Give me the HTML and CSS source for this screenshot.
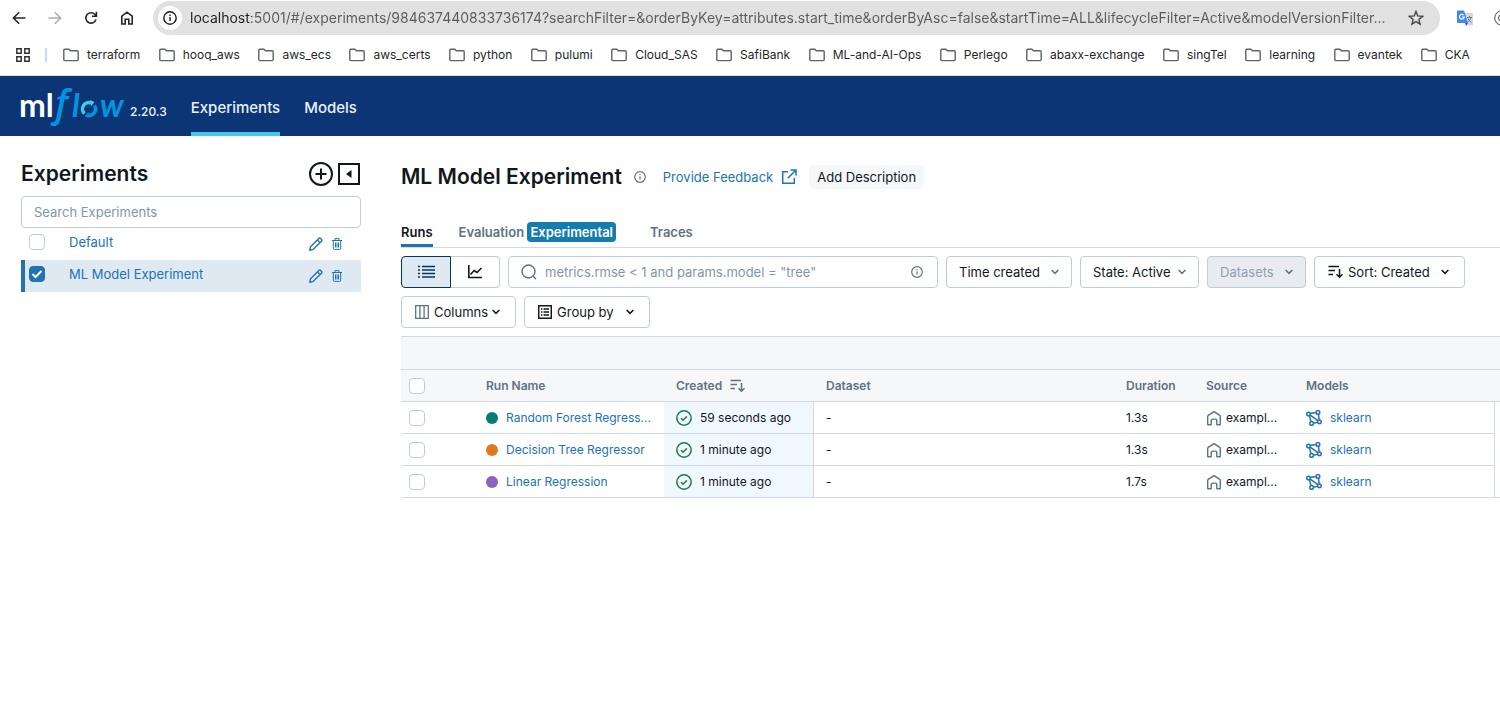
FILE: index.html
```html
<!DOCTYPE html>
<html lang="en">
<head>
    <meta charset="UTF-8">
    <meta name="viewport" content="width=device-width, initial-scale=1.0">
    <title>ML Model Experiment - MLflow</title>
    <link rel="stylesheet" href="styles.css">
</head>
<body>
    <!-- shared icons -->
    <svg class="sprite" aria-hidden="true">
        <symbol id="folder" viewBox="0 0 16 14"><path d="M.8 11.6V2.2q0-1 1-1h4l1.6 1.6h6.8q1 0 1 1v7.8q0 1-1 1H1.8q-1 0-1-1z" fill="none" stroke="#5f6368" stroke-width="1.4"/></symbol>
        <symbol id="info" viewBox="0 0 12 12"><circle cx="6" cy="6" r="5.3" fill="none" stroke="currentColor" stroke-width="1.2"/><path d="M6 5.2v3.4M6 3v1.2" stroke="currentColor" stroke-width="1.2"/></symbol>
        <symbol id="pencil" viewBox="0 0 14 14"><path d="M.8 13.2l.6-3.2 8.4-8.5q.9-.8 1.8 0l.9.9q.8.9 0 1.8L4 12.6zM8.4 3l2.6 2.6" fill="none" stroke="currentColor" stroke-width="1.4" stroke-linejoin="round"/></symbol>
        <symbol id="trash" viewBox="0 0 10 12"><path d="M0 2.5h10M3 2.3V.6h4v1.7M1.3 2.6v7.6q0 1.2 1.1 1.2h5.2q1.1 0 1.1-1.2V2.6M3.5 4.5v5M5 4.5v5M6.5 4.5v5" fill="none" stroke="currentColor"/></symbol>
        <symbol id="chevron" viewBox="0 0 8 6"><path d="M.6 1L4 4.4 7.4 1" fill="none" stroke="currentColor" stroke-width="1.5"/></symbol>
        <symbol id="sort" viewBox="0 0 16 14"><path d="M.5 1.5h10.5M.5 5.5h6.5M.5 9.5h4.5M11.5 4v8M8.500 9.300l3 3 3-3" fill="none" stroke="currentColor" stroke-width="1.5"/></symbol>
        <symbol id="check" viewBox="0 0 16 16"><circle cx="8" cy="8" r="7.2" fill="none" stroke="currentColor" stroke-width="1.5"/><path d="M5 8.2l2.1 2 3.8-3.8" fill="none" stroke="currentColor" stroke-width="1.5"/></symbol>
        <symbol id="home" viewBox="0 0 16 16"><path d="M1.7 14.2V6.4q0-.7.5-1L8 1.6l5.8 3.8q.5.3.5 1v7.8q0 .6-.6.6h-2.4q-.5 0-.5-.6v-3.6q0-1.5-1.3-1.5H6.5q-1.3 0-1.3 1.5v3.6q0 .6-.5.6H2.3q-.6 0-.6-.6z" fill="none" stroke="currentColor" stroke-width="1.4"/></symbol>
        <symbol id="model" viewBox="0 0 16 16"><g fill="none" stroke="currentColor" stroke-width="1.5"><path d="M4.2 3.6l5.8-1M3.3 5.6l1.8 6M3.9 4.9l8 5.8M12.4 4.2l.8 6.2M7.6 13.2l4-1.1"/><circle cx="2.5" cy="4" r="1.8"/><circle cx="12" cy="2.4" r="1.8"/><circle cx="5.6" cy="13.4" r="1.8"/><circle cx="13.4" cy="11.8" r="1.8"/></g></symbol>
    </svg>

    <div class="browser">
        <div class="toolbar">
            <button class="nav-btn" aria-label="Back"><svg width="14" height="14" viewBox="0 0 14 14"><path d="M13.5 7H1.5M7.2 1.2L1.4 7l5.8 5.8"/></svg></button>
            <button class="nav-btn off" aria-label="Forward"><svg width="14" height="14" viewBox="0 0 14 14"><path d="M.5 7h12M6.8 1.2L12.6 7l-5.8 5.8"/></svg></button>
            <button class="nav-btn" aria-label="Reload"><svg width="14" height="14" viewBox="0 0 14 14"><path d="M12 8.5A5.2 5.2 0 1 1 10.8 3.3L12.2 4.6M12.4.8v4.4H8"/></svg></button>
            <button class="nav-btn" aria-label="Home"><svg width="14" height="14" viewBox="0 0 14 14"><path d="M1.8 13V5.2L7 1.2l5.2 4V13H8.8V8.2H5.2V13z"/></svg></button>
            <div class="address">
                <span class="site-info"><svg width="14" height="14"><use href="#info"/></svg></span>
                <input type="text" class="url" aria-label="Address" value="localhost:5001/#/experiments/984637440833736174?searchFilter=&amp;orderByKey=attributes.start_time&amp;orderByAsc=false&amp;startTime=ALL&amp;lifecycleFilter=Active&amp;modelVersionFilter...">
                <button class="star" aria-label="Bookmark"><svg width="16" height="16" viewBox="0 0 16 16"><path d="M8 1.4l1.8 4.5 4.9.4-3.8 3.1 1.2 4.8L8 11.6l-4.1 2.6 1.2-4.8-3.8-3.1 4.9-.4z" fill="none" stroke="#474747" stroke-width="1.4"/></svg></button>
            </div>
            <div class="extensions">
                <svg width="17" height="17" viewBox="0 0 17 17"><path d="M6 3h10v12.5H9z" fill="#d5d7db"/><path d="M10 7.5h5M12.5 6v1.5M14.2 7.5q-.8 3-3.6 4.5M11 8.5q1 2.5 3.500 4" fill="none" stroke="#6b7f8c"/><path d="M1 .5h6L11 13H1q-1 0-1-1V1.500q0-1 1-1z" fill="#4285f4"/><path d="M8 13h3l-2 3z" fill="#2a56c6"/><path d="M6.800 5.200A2.400 2.400 0 1 0 7.300 7H5" fill="none" stroke="#fff" stroke-width="1.200"/></svg>
                <svg width="16" height="16" viewBox="0 0 16 16"><circle cx="8" cy="8" r="7.300" fill="none" stroke="#474747"/><circle cx="8" cy="8" r="3.500" fill="none" stroke="#474747"/></svg>
            </div>
        </div>
        <nav class="bookmarks" aria-label="Bookmarks">
            <button class="apps" aria-label="Apps"><svg width="14" height="14" viewBox="0 0 14 14"><path d="M.8.8h4.400v4.400H.8zM8.800.8h4.400v4.400H8.800zM.8 8.800h4.400v4.400H.8zM8.800 8.800h4.400v4.400H8.800z" fill="none" stroke="#333" stroke-width="1.500"/></svg></button>
            <div class="folders">
                <a href="#"><svg width="16" height="14"><use href="#folder"/></svg>terraform</a>
                <a href="#"><svg width="16" height="14"><use href="#folder"/></svg>hooq_aws</a>
                <a href="#"><svg width="16" height="14"><use href="#folder"/></svg>aws_ecs</a>
                <a href="#"><svg width="16" height="14"><use href="#folder"/></svg>aws_certs</a>
                <a href="#"><svg width="16" height="14"><use href="#folder"/></svg>python</a>
                <a href="#"><svg width="16" height="14"><use href="#folder"/></svg>pulumi</a>
                <a href="#"><svg width="16" height="14"><use href="#folder"/></svg>Cloud_SAS</a>
                <a href="#"><svg width="16" height="14"><use href="#folder"/></svg>SafiBank</a>
                <a href="#"><svg width="16" height="14"><use href="#folder"/></svg>ML-and-AI-Ops</a>
                <a href="#"><svg width="16" height="14"><use href="#folder"/></svg>Perlego</a>
                <a href="#"><svg width="16" height="14"><use href="#folder"/></svg>abaxx-exchange</a>
                <a href="#"><svg width="16" height="14"><use href="#folder"/></svg>singTel</a>
                <a href="#"><svg width="16" height="14"><use href="#folder"/></svg>learning</a>
                <a href="#"><svg width="16" height="14"><use href="#folder"/></svg>evantek</a>
                <a href="#"><svg width="16" height="14"><use href="#folder"/></svg>CKA</a>
            </div>
        </nav>
    </div>

    <header class="header">
        <a href="#" class="logo" aria-label="MLflow home">
            <svg width="108" height="60" viewBox="0 0 108 60">
                <text x="0" y="41" class="logo-ml">ml</text>
                <text x="36" y="41" class="logo-f">f</text>
                <text x="53" y="41" class="logo-flow">l</text>
                <text x="81" y="41" class="logo-flow">w</text>
                <g fill="none" stroke-width="3.500"><path d="M65.500 37.500a6.300 6.300 0 0 1 6.500-10.500" stroke="#43c9ed"/><path d="M75.500 29.500a6.300 6.300 0 0 1-6.500 9.700" stroke="#0194e2"/></g>
                <path d="M71 24l4.500 2-3.500 4.500z" fill="#43c9ed"/><path d="M69.500 36l-4 4.500 4.500 1z" fill="#0194e2"/>
            </svg>
        </a>
        <span class="version">2.20.3</span>
        <nav class="main-nav">
            <a href="#" class="active">Experiments</a>
            <a href="#">Models</a>
        </nav>
    </header>

    <div class="page">
        <aside class="sidebar">
            <div class="sidebar-head">
                <h2>Experiments</h2>
                <button class="plain" aria-label="New experiment"><svg width="24" height="24" viewBox="0 0 24 24"><circle cx="12" cy="12" r="11" fill="none" stroke="#11171c" stroke-width="2"/><path d="M12 6.500v11M6.500 12h11" stroke="#11171c" stroke-width="2"/></svg></button>
                <button class="plain" aria-label="Hide experiment list"><svg width="22" height="22" viewBox="0 0 22 22"><path d="M1 1h20v20H1z" fill="none" stroke="#11171c" stroke-width="2"/><path d="M13.500 7v8L8 11z" fill="#11171c"/></svg></button>
            </div>
            <input type="text" class="search-exp" placeholder="Search Experiments" aria-label="Search Experiments">
            <ul class="exp-list">
                <li>
                    <input type="checkbox" aria-label="Select Default">
                    <a href="#">Default</a>
                    <button class="plain" aria-label="Rename"><svg width="14" height="14"><use href="#pencil"/></svg></button>
                    <button class="plain" aria-label="Delete"><svg width="10" height="12"><use href="#trash"/></svg></button>
                </li>
                <li class="selected">
                    <input type="checkbox" checked aria-label="Select ML Model Experiment">
                    <a href="#">ML Model Experiment</a>
                    <button class="plain" aria-label="Rename"><svg width="14" height="14"><use href="#pencil"/></svg></button>
                    <button class="plain" aria-label="Delete"><svg width="10" height="12"><use href="#trash"/></svg></button>
                </li>
            </ul>
        </aside>

        <main class="content">
            <div class="title-row">
                <h1>ML Model Experiment</h1>
                <svg class="muted" width="12" height="12"><use href="#info"/></svg>
                <a href="#" class="feedback">Provide Feedback <svg width="16" height="16" viewBox="0 0 16 16"><path d="M7 2.700H1.700v11.600h11.600V9M9.500 1h5.500v5.500M15 1L6.800 9.200" fill="none" stroke="currentColor" stroke-width="1.500"/></svg></a>
                <button class="add-desc">Add Description</button>
            </div>

            <nav class="tabs">
                <a href="#" class="active">Runs</a>
                <a href="#">Evaluation <span class="badge">Experimental</span></a>
                <a href="#">Traces</a>
            </nav>

            <div class="filters">
                <div class="view-switch">
                    <button class="on" aria-label="Table view"><svg width="18" height="14" viewBox="0 0 18 14"><path d="M5 1.500h13M5 5h13M5 8.500h13M5 12h13M1 1.500h2M1 5h2M1 8.500h2M1 12h2" stroke="#04355d" stroke-width="1.500"/></svg></button>
                    <button aria-label="Chart view"><svg width="16" height="16" viewBox="0 0 16 16"><path d="M1.800 1v12.500H15M3.500 10.500l3.700-4 2.800 2 4.500-4.500" fill="none" stroke="#11171c" stroke-width="1.600"/></svg></button>
                </div>
                <div class="search-runs">
                    <svg width="16" height="16" viewBox="0 0 16 16"><circle cx="7.500" cy="7.500" r="6.500" fill="none" stroke="currentColor" stroke-width="1.400"/><path d="M12 12l3 3" stroke="currentColor" stroke-width="1.400"/></svg>
                    <input type="text" placeholder='metrics.rmse &lt; 1 and params.model = "tree"' aria-label="Search runs">
                    <svg width="12" height="12"><use href="#info"/></svg>
                </div>
                <select aria-label="Time created"><option>Time created</option></select>
                <select class="state" aria-label="State"><option>State: Active</option></select>
                <select aria-label="Datasets" disabled><option>Datasets</option></select>
                <button class="btn sort-btn"><svg width="16" height="14"><use href="#sort"/></svg>Sort: Created<svg class="chev" width="8" height="6"><use href="#chevron"/></svg></button>
                <button class="btn columns-btn"><svg class="muted" width="14" height="14" viewBox="0 0 14 14"><path d="M.7.7h12.600v12.600H.7zM4.900.7v12.600M9.100.7v12.600" fill="none" stroke="currentColor" stroke-width="1.300"/></svg>Columns<svg class="chev" width="8" height="6"><use href="#chevron"/></svg></button>
                <button class="btn"><svg width="14" height="14" viewBox="0 0 14 14"><path d="M.7.7h12.600v12.600H.7z" fill="none" stroke="currentColor" stroke-width="1.500"/><path d="M5.500 4H11M5.500 7H11M5.500 10H11M3 4h1.400M3 7h1.400M3 10h1.400" stroke="currentColor" stroke-width="1.300"/></svg>Group by<svg class="chev" width="8" height="6"><use href="#chevron"/></svg></button>
            </div>

            <table class="runs">
                <colgroup>
                    <col class="c-check"><col class="c-name"><col class="c-created"><col class="c-dataset"><col class="c-duration"><col class="c-source"><col class="c-models"><col>
                </colgroup>
                <thead>
                    <tr class="group-row"><td colspan="8"></td></tr>
                    <tr>
                        <th><input type="checkbox" aria-label="Select all runs"></th>
                        <th>Run Name</th>
                        <th><span class="cell">Created <svg width="16" height="14"><use href="#sort"/></svg></span></th>
                        <th>Dataset</th>
                        <th>Duration</th>
                        <th>Source</th>
                        <th>Models</th>
                        <td></td>
                    </tr>
                </thead>
                <tbody>
                    <tr>
                        <td><input type="checkbox" aria-label="Select run"></td>
                        <td><span class="cell"><i class="dot teal"></i><a href="#">Random Forest Regress...</a></span></td>
                        <td class="created"><span class="cell"><svg class="ok" width="16" height="16"><use href="#check"/></svg>59 seconds ago</span></td>
                        <td>-</td>
                        <td>1.3s</td>
                        <td><span class="cell source"><svg class="muted" width="16" height="16"><use href="#home"/></svg>exampl...</span></td>
                        <td class="models"><span class="cell"><svg width="16" height="16"><use href="#model"/></svg><a href="#">sklearn</a></span></td>
                        <td class="filler"></td>
                    </tr>
                    <tr>
                        <td><input type="checkbox" aria-label="Select run"></td>
                        <td><span class="cell"><i class="dot orange"></i><a href="#">Decision Tree Regressor</a></span></td>
                        <td class="created"><span class="cell"><svg class="ok" width="16" height="16"><use href="#check"/></svg>1 minute ago</span></td>
                        <td>-</td>
                        <td>1.3s</td>
                        <td><span class="cell source"><svg class="muted" width="16" height="16"><use href="#home"/></svg>exampl...</span></td>
                        <td class="models"><span class="cell"><svg width="16" height="16"><use href="#model"/></svg><a href="#">sklearn</a></span></td>
                        <td class="filler"></td>
                    </tr>
                    <tr>
                        <td><input type="checkbox" aria-label="Select run"></td>
                        <td><span class="cell"><i class="dot purple"></i><a href="#">Linear Regression</a></span></td>
                        <td class="created"><span class="cell"><svg class="ok" width="16" height="16"><use href="#check"/></svg>1 minute ago</span></td>
                        <td>-</td>
                        <td>1.7s</td>
                        <td><span class="cell source"><svg class="muted" width="16" height="16"><use href="#home"/></svg>exampl...</span></td>
                        <td class="models"><span class="cell"><svg width="16" height="16"><use href="#model"/></svg><a href="#">sklearn</a></span></td>
                        <td class="filler"></td>
                    </tr>
                </tbody>
            </table>
        </main>
    </div>
</body>
</html>
```

FILE: styles.css
```css
* {
    box-sizing: border-box;
}

body {
    margin: 0;
    font-family: Inter, "Liberation Sans", sans-serif;
    font-size: 13px;
    line-height: 20px;
    color: #11171c;
    background-color: #fff;
}

a {
    color: #2272b4;
    text-decoration: none;
}

button,
input,
select {
    font: inherit;
    color: inherit;
}

button {
    cursor: pointer;
}

svg {
    display: block;
    flex-shrink: 0;
}

h1,
h2 {
    margin: 0;
    font-size: 21px;
    line-height: 28px;
    font-weight: 600;
}

.sprite {
    position: absolute;
    width: 0;
    height: 0;
}

.muted {
    color: #5f7281;
}

.plain {
    padding: 0;
    border: none;
    background: none;
    color: inherit;
}

/* browser bars */
.browser {
    border-bottom: 1px solid #d5dbdb;
    overflow: hidden;
}

.toolbar {
    display: flex;
    align-items: center;
    height: 36px;
    padding-left: 1px;
}

.nav-btn {
    display: flex;
    justify-content: center;
    width: 36px;
    padding: 0;
    border: none;
    background: none;
}

.nav-btn svg {
    fill: none;
    stroke: #262626;
    stroke-width: 1.6;
}

.nav-btn.off svg {
    stroke: #adadad;
}

.address {
    display: flex;
    align-items: center;
    flex: 1;
    min-width: 0;
    height: 34px;
    margin-left: 8px;
    padding: 0 16px 0 5px;
    border-radius: 17px;
    background-color: #e1e1e1;
}

.site-info {
    display: flex;
    align-items: center;
    justify-content: center;
    width: 24px;
    height: 24px;
    border-radius: 50%;
    background-color: #fff;
}

.url {
    flex: 1;
    min-width: 0;
    margin: 0 8px;
    padding: 0;
    border: none;
    font-size: 14px;
    text-overflow: ellipsis;
    /* host name is darker than the rest of the address */
    background: linear-gradient(to right, #1f1f1f 60px, #5a5a5a 60px);
    -webkit-background-clip: text;
    background-clip: text;
    color: transparent;
}

.star {
    padding: 0;
    border: none;
    background: none;
}

.extensions {
    display: flex;
    gap: 20px;
    width: 60px;
    padding-left: 17px;
    overflow: hidden;
}

.bookmarks {
    display: flex;
    align-items: center;
    gap: 16px;
    height: 39px;
    padding: 0 30px 2px 16px;
    font-size: 12px;
    white-space: nowrap;
}

.folders {
    display: flex;
    flex: 1;
    justify-content: space-between;
}

.folders a {
    display: flex;
    align-items: center;
    gap: 8px;
    color: #262626;
}

.apps {
    padding: 0 15px 0 0;
    border: none;
    border-right: 2px solid #b5e5f0;
    background: none;
}

/* mlflow header */
.header {
    display: flex;
    height: 60px;
    padding-left: 19px;
    background-color: #0b3574;
    color: #e7f1fb;
}

.logo-ml {
    font: 700 32px Lato, sans-serif;
    fill: #fff;
}

.logo-f {
    font: italic 600 38px "Open Sans", sans-serif;
    fill: #0194e2;
}

.logo-flow {
    font: italic 700 32px Lato, sans-serif;
    fill: #0194e2;
}

.version {
    padding: 26px 0 0 3px;
    font-size: 12px;
    font-weight: 500;
}

.main-nav {
    display: flex;
    gap: 24px;
    margin-left: 24px;
    font-size: 15px;
    font-weight: 500;
}

.main-nav a {
    padding-top: 22px;
    color: #e7f1fb;
    border-bottom: 4px solid transparent;
}

.main-nav .active {
    border-bottom-color: #43c9ed;
}

.page {
    display: flex;
    gap: 40px;
    padding-left: 21px;
}

/* experiment list */
.sidebar {
    width: 340px;
    flex-shrink: 0;
    padding-top: 24px;
}

.sidebar-head {
    display: flex;
    align-items: center;
    gap: 5px;
    margin-bottom: 8px;
    padding-right: 1px;
}

.sidebar-head h2 {
    flex: 1;
}

.search-exp {
    display: block;
    width: 100%;
    height: 32px;
    padding: 0 12px;
    border: 1px solid #c0cdd8;
    border-radius: 4px;
}

input::placeholder {
    color: #8396a5;
    opacity: 1;
}

.exp-list {
    margin: 0;
    padding: 0;
    list-style: none;
}

.exp-list li {
    display: flex;
    align-items: center;
    height: 32px;
    padding: 0 19px 4px 4px;
    border-left: 4px solid transparent;
    color: #2272b4;
}

.exp-list li.selected {
    border-left-color: #2272b4;
    background-color: #dfe9f2;
}

.exp-list a {
    flex: 1;
    margin-left: 24px;
}

.exp-list .plain {
    margin: 4px 0 0 9px;
}

input[type="checkbox"] {
    appearance: none;
    display: block;
    width: 16px;
    height: 16px;
    margin: 0;
    border: 1px solid #c0cdd8;
    border-radius: 4px;
    background-color: #fff;
}

input[type="checkbox"]:checked {
    border-color: #2272b4;
    background: #2272b4 url("data:image/svg+xml,%3Csvg xmlns='http://www.w3.org/2000/svg' width='14' height='14'%3E%3Cpath d='M2.500 7l3 3 6-6' fill='none' stroke='white' stroke-width='2'/%3E%3C/svg%3E") center no-repeat;
}

/* experiment page */
.content {
    flex: 1;
    min-width: 0;
    padding-top: 27px;
}

.title-row {
    display: flex;
    align-items: center;
}

.title-row > .muted {
    margin: 0 17px 0 12px;
}

.feedback {
    display: flex;
    align-items: center;
    gap: 8px;
}

.add-desc {
    height: 24px;
    margin-left: 12px;
    padding: 0 8px;
    border: none;
    border-radius: 4px;
    background-color: #f6f7f9;
}

.tabs {
    display: flex;
    margin-top: 31px;
    border-bottom: 1px solid #d1d9e1;
    font-weight: 600;
}

.tabs a {
    height: 25px;
    margin-right: 26px;
    color: #5f7281;
}

.tabs a:nth-child(2) {
    margin-right: 34px;
}

.tabs .active {
    color: #11171c;
    border-bottom: 3px solid #2272b4;
}

.badge {
    display: inline-block;
    padding: 0 3px;
    border-radius: 4px;
    background-color: #157cae;
    color: #fff;
}

.filters {
    display: flex;
    flex-wrap: wrap;
    gap: 8px;
    padding: 8px 0;
}

.view-switch {
    display: flex;
}

.view-switch button {
    display: flex;
    align-items: center;
    justify-content: center;
    width: 49px;
    height: 32px;
    padding: 0;
    border: 1px solid #c0cdd8;
    border-left: none;
    border-radius: 0 4px 4px 0;
    background-color: #fff;
}

.view-switch .on {
    width: 50px;
    border: 1px solid #04355d;
    border-radius: 4px 0 0 4px;
    background-color: #dfe9f2;
}

.search-runs {
    display: flex;
    align-items: center;
    gap: 8px;
    width: 430px;
    height: 32px;
    padding: 0 14px 0 12px;
    border: 1px solid #c0cdd8;
    border-radius: 4px;
    color: #5f7281;
}

.search-runs input {
    flex: 1;
    min-width: 0;
    padding: 0;
    border: none;
}

select,
.btn {
    height: 32px;
    padding: 0 12px;
    border: 1px solid #c0cdd8;
    border-radius: 4px;
    background-color: #fff;
}

select {
    appearance: none;
    padding-right: 31px;
    background-image: url("data:image/svg+xml,%3Csvg xmlns='http://www.w3.org/2000/svg' width='8' height='6'%3E%3Cpath d='M.6 1L4 4.400 7.400 1' fill='none' stroke='%235f7281' stroke-width='1.500'/%3E%3C/svg%3E");
    background-position: right 12px center;
    background-repeat: no-repeat;
}

.state {
    padding-right: 27px;
}

select:disabled {
    opacity: 1;
    color: #8fa1b0;
    background-color: #e8ecf0;
}

.btn {
    display: flex;
    align-items: center;
    gap: 5px;
    padding: 0 15px 0 13px;
}

.btn .chev {
    margin-left: 7px;
}

.sort-btn {
    gap: 4px;
}

.columns-btn .chev {
    margin-left: -1px;
}

/* runs table */
.runs {
    width: 100%;
    table-layout: fixed;
    border-collapse: separate;
    border-spacing: 0;
    border-top: 1px solid #d1d9e1;
}

.c-check { width: 73px; }
.c-name { width: 190px; }
.c-created { width: 150px; }
.c-dataset { width: 300px; }
.c-duration { width: 80px; }
.c-source { width: 100px; }
.c-models { width: 201px; }

.runs th,
.runs td {
    height: 32px;
    padding: 0 12px;
    border-bottom: 1px solid #d1d9e1;
    font-size: 12px;
    text-align: left;
    white-space: nowrap;
}

.runs th:first-child,
.runs td:first-child {
    padding-left: 8px;
}

.runs thead {
    background-color: #f6f7f9;
    color: #5f7281;
}

.runs th {
    font-weight: 600;
}

.runs .group-row td {
    height: 33px;
}

.runs .created {
    border-right: 1px solid #d1d9e1;
    background-color: #f0f8ff;
}

.runs .models {
    border-right: 1px solid #d1d9e1;
    color: #2272b4;
}

.runs .filler {
    padding: 0;
    border-bottom: none;
}

.runs tr:last-child .filler {
    border-bottom: 1px solid #d1d9e1;
}

.cell {
    display: flex;
    align-items: center;
    gap: 8px;
}

.source {
    gap: 4px;
}

.ok {
    color: #277c43;
}

.dot {
    width: 12px;
    height: 12px;
    border-radius: 50%;
}

.teal { background-color: #077a73; }
.orange { background-color: #de7921; }
.purple { background-color: #8a63bf; }
```
